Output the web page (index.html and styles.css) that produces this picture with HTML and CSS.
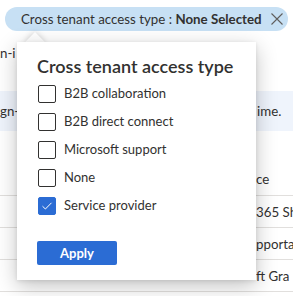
FILE: index.html
```html
<!DOCTYPE html>
<html lang="en">
<head>
<meta charset="utf-8">
<title>Cross tenant access type filter</title>
<link rel="stylesheet" href="styles.css">
</head>
<body>
  <div class="page">
    <div class="toolbar">
      <div class="pill">
        <span class="pill-text">Cross tenant access type : <b>None Selected</b></span>
        <svg class="pill-close" width="12" height="12" viewBox="0 0 12 12" aria-hidden="true">
          <path d="M0.5 0.5 L11.5 11.5 M11.5 0.5 L0.5 11.5" stroke="#605e5c" stroke-width="1.1" fill="none"/>
        </svg>
      </div>
    </div>

    <div class="subtitle">n-i</div>

    <div class="band">
      <span class="band-left">gn-</span>
      <span class="band-right">ime.</span>
    </div>

    <div class="table">
      <div class="row head"><span class="cell-left"></span><span class="cell-right">ce</span></div>
      <div class="row"><span class="cell-left"></span><span class="cell-right">365 Sh</span></div>
      <div class="row"><span class="cell-left"></span><span class="cell-right">pporta</span></div>
      <div class="row"><span class="cell-left"></span><span class="cell-right">ft Gra</span></div>
    </div>
  </div>

  <div class="beak"></div>
  <div class="popup">
    <div class="popup-title">Cross tenant access type</div>
    <ul class="options">
      <li class="option"><span class="box"></span><span class="label">B2B collaboration</span></li>
      <li class="option"><span class="box"></span><span class="label">B2B direct connect</span></li>
      <li class="option"><span class="box"></span><span class="label">Microsoft support</span></li>
      <li class="option"><span class="box"></span><span class="label">None</span></li>
      <li class="option"><span class="box checked"><svg width="12" height="10" viewBox="0 0 12 10" aria-hidden="true"><path d="M1.5 5.2 L4.4 8 L10.5 1.8" stroke="#ffffff" stroke-width="1" fill="none"/></svg></span><span class="label">Service provider</span></li>
    </ul>
    <button class="apply" type="button">Apply</button>
  </div>
</body>
</html>
```

FILE: styles.css
```css
html, body {
  margin: 0;
  padding: 0;
  background: #ffffff;
}

body {
  font-family: "Lato", "Noto Sans", sans-serif;
  font-size: 13.3px;
  color: #323130;
  width: 293px;
  height: 296px;
  overflow: hidden;
  position: relative;
}

.page {
  display: flex;
  flex-direction: column;
}

.toolbar {
  padding: 7px 0 0 5px;
}

.pill {
  box-sizing: border-box;
  width: 283px;
  height: 24px;
  border-radius: 12px;
  background: #c7e0f4;
  display: flex;
  align-items: center;
  justify-content: space-between;
  padding: 0 5px 0 16px;
  white-space: nowrap;
  line-height: 20px;
}

.pill-text b {
  font-weight: 700;
}

.pill-close {
  flex: none;
}

.subtitle {
  margin-top: 12px;
  line-height: 20px;
  white-space: nowrap;
}

.band {
  margin-top: 28px;
  height: 40px;
  background: #eff4fc;
  display: grid;
  grid-template-columns: 257px 1fr;
  align-items: center;
  white-space: nowrap;
  line-height: 20px;
}

.band-left,
.cell-left {
  overflow: hidden;
}

.table {
  margin-top: 32px;
  display: flex;
  flex-direction: column;
}

.row {
  height: 31px;
  border-bottom: 1px solid #e1dfdd;
  display: grid;
  grid-template-columns: 256px 1fr;
  align-items: center;
  white-space: nowrap;
  line-height: 20px;
}

.row.head {
  height: 32px;
}

.cell-right {
  overflow: hidden;
}

.beak {
  position: absolute;
  left: 28px;
  top: 35px;
  width: 14px;
  height: 14px;
  background: #ffffff;
  transform: rotate(45deg);
  box-shadow: 0 0 6px rgba(0, 0, 0, 0.2);
}

.popup {
  position: absolute;
  left: 17px;
  top: 42px;
  width: 239px;
  box-sizing: border-box;
  background: #ffffff;
  padding: 12px 20px 15px 20px;
  box-shadow: 0 6px 20px rgba(0, 0, 0, 0.24), 0 1px 4px rgba(0, 0, 0, 0.1);
}

.popup-title {
  font-size: 18px;
  font-weight: 600;
  line-height: 24px;
  white-space: nowrap;
}

.options {
  list-style: none;
  margin: 2px 0 0 0;
  padding: 0;
}

.option {
  height: 28px;
  display: flex;
  align-items: center;
  gap: 8px;
  line-height: 20px;
  font-size: 13px;
}

.label {
  padding-bottom: 2px;
}

.box {
  box-sizing: border-box;
  width: 18px;
  height: 18px;
  margin-left: 1px;
  border: 1px solid #323130;
  border-radius: 2px;
  display: flex;
  align-items: center;
  justify-content: center;
  flex: none;
}

.box.checked {
  background: #2b6cd4;
  border-color: #2b6cd4;
}

.apply {
  margin-top: 21px;
  width: 80px;
  height: 24px;
  border: none;
  border-radius: 2px;
  background: #2b6cd4;
  color: #ffffff;
  font-family: "Lato", "Noto Sans", sans-serif;
  font-size: 13px;
  font-weight: 700;
  padding: 0;
  display: block;
}
```
